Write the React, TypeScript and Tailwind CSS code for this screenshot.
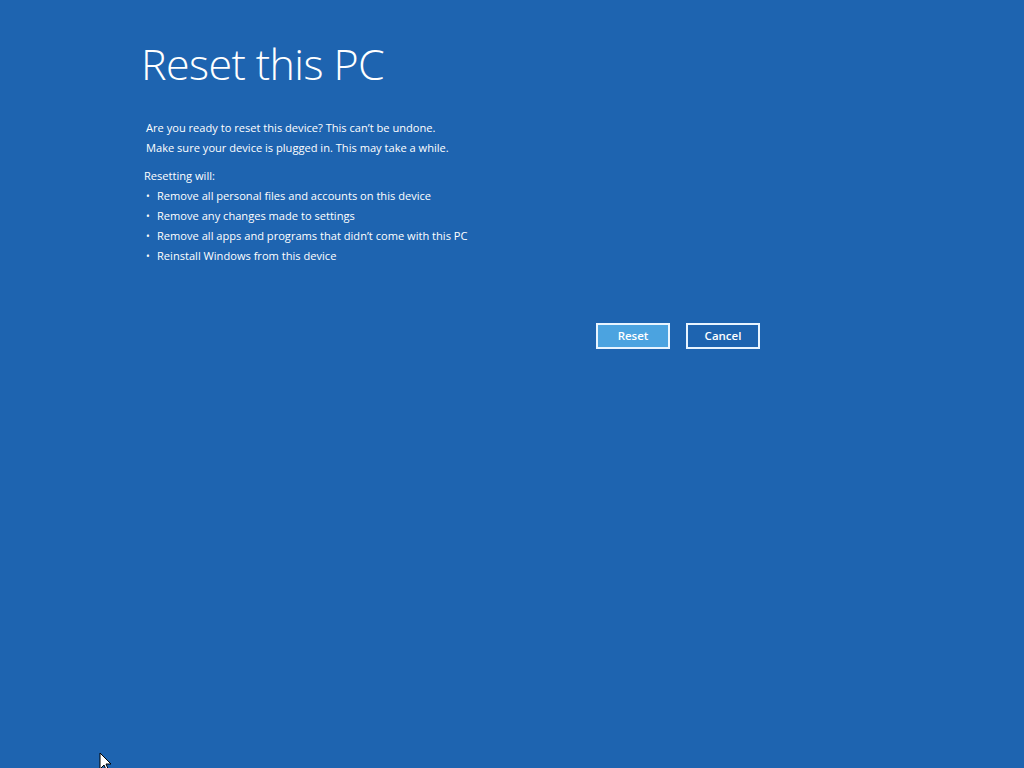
export default function App() {
  const items = [
    "Remove all personal files and accounts on this device",
    "Remove any changes made to settings",
    "Remove all apps and programs that didn\u2019t come with this PC",
    "Reinstall Windows from this device",
  ];
  return (
    <div
      className="relative w-[1024px] h-[768px] overflow-hidden bg-[#1e64b0] text-white"
      style={{ fontFamily: '"Open Sans", "Noto Sans", sans-serif' }}
    >
      <div className="pl-[141px] pt-[36px] w-[760px]">
        <h1 className="text-[43px] font-light leading-[56px] tracking-[-0.6px]">Reset this PC</h1>

        <div className="mt-[26px] pl-[5px] text-[11.1px] leading-[20px]">
          <p>Are you ready to reset this device? This can&rsquo;t be undone.</p>
          <p>Make sure your device is plugged in. This may take a while.</p>
        </div>

        <div className="mt-[8px] pl-[3px] text-[11.1px] leading-[20px]">
          <p>Resetting will:</p>
          <ul>
            {items.map((t) => (
              <li key={t} className="flex items-center">
                <span className="w-[13px] pl-[2px] text-[10px]">&bull;</span>
                <span>{t}</span>
              </li>
            ))}
          </ul>
        </div>

        <div className="mt-[57px] flex justify-end gap-[16px] pr-0">
          <button className="w-[74px] h-[26px] border-2 border-[#e8f4ff] bg-[#4ba3e0] text-[11.5px] font-semibold">
            Reset
          </button>
          <button className="w-[74px] h-[26px] border-2 border-[#e8f4ff] bg-[#1e64b0] text-[11.5px] font-semibold">
            Cancel
          </button>
        </div>
      </div>

      {/* mouse cursor */}
      <svg className="absolute left-[99px] top-[752px]" width="14" height="22" viewBox="0 0 14 22">
        <path d="M1 1 L1 17 L5 13 L8 20 L10 19 L7 12 L12 12 Z" fill="#fff" stroke="#000" strokeWidth="1" />
      </svg>
    </div>
  );
}
